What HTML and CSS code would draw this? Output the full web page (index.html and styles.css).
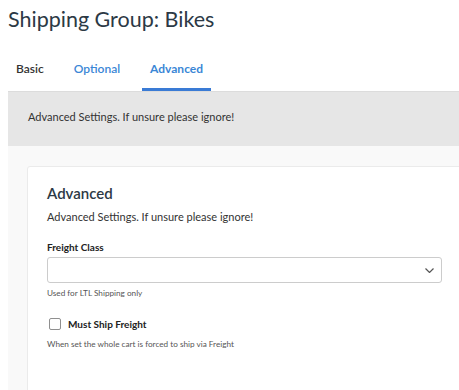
FILE: index.html
```html
<!DOCTYPE html>
<html lang="en">
<head>
  <meta charset="UTF-8" />
  <title>Shipping Group: Bikes</title>
  <link rel="stylesheet" href="styles.css">
</head>
<body>
  <h1 class="page-title">Shipping Group: Bikes</h1>
  <div class="tabs">
    <a class="tab">Basic</a>
    <a class="tab tab-link">Optional</a>
    <a class="tab tab-link active">Advanced</a>
  </div>
  <div class="tab-panel">
    <div class="panel-intro">Advanced Settings. If unsure please ignore!</div>
    <div class="panel-body">
      <div class="card">
        <h2 class="card-title">Advanced</h2>
        <p class="card-desc">Advanced Settings. If unsure please ignore!</p>

        <div class="field">
          <label class="field-label">Freight Class</label>
          <div class="select">
            <svg class="select-arrow" width="9" height="5" viewBox="0 0 9 5"><path d="M0.5 0.5l4 4 4-4" fill="none" stroke="#555" stroke-width="1.2"/></svg>
          </div>
          <div class="field-help">Used for LTL Shipping only</div>
        </div>

        <div class="field-check">
          <label class="check">
            <span class="check-box"></span>
            <span class="check-label">Must Ship Freight</span>
          </label>
          <div class="field-help help-tight">When set the whole cart is forced to ship via Freight</div>
        </div>
      </div>
    </div>
  </div>
</body>
</html>
```

FILE: styles.css
```css
body {
  font-family: 'Lato', sans-serif;
  color: #333;
  background: #fff;
  margin: 8px 0 0 8px;
  overflow: hidden;
}
.page-title {
  font-size: 21.5px;
  font-weight: 400;
  color: #2c3945;
  margin: 0;
  line-height: 22px;
}
.tabs {
  display: flex;
  gap: 14px;
  margin-top: 32px;
}
.tab {
  padding: 0 8px 12px;
  font-size: 12px;
  line-height: 14px;
  font-weight: 600;
  color: #333;
  border-bottom: 3px solid transparent;
}
.tab-link { color: #3a87d6; }
.tab.active {
  font-weight: 700;
  border-bottom-color: #3a7bd5;
}
.tab-panel {
  width: 480px;
  height: 299px;
  background: #f9f9f9;
  overflow: hidden;
}
.panel-intro {
  background: #e6e6e6;
  border-top: 1px solid #dcdcdc;
  padding: 18px 20px 22px;
  font-size: 11px;
  line-height: 14px;
}
.panel-body {
  padding: 20px 0 0 19px;
}
.card {
  background: #fff;
  border: 1px solid #ebebeb;
  border-radius: 3px;
  padding: 17px 19px 0;
  height: 300px;
}
.card-title {
  margin: 0;
  font-size: 15px;
  line-height: 18px;
  font-weight: 600;
  color: #2c3945;
}
.card-desc {
  margin: 8px 0 0;
  font-size: 11px;
  line-height: 13px;
}
.field { margin-top: 18px; }
.field-label {
  display: block;
  font-size: 10px;
  line-height: 12px;
  font-weight: 700;
  color: #222;
  margin-bottom: 4px;
}
.select {
  box-sizing: border-box;
  height: 26px;
  width: 395px;
  border: 1px solid #ccc;
  border-radius: 3px;
  display: flex;
  align-items: center;
  justify-content: flex-end;
}
.select-arrow { margin-right: 7px; }
.field-help {
  font-size: 8.2px;
  line-height: 10px;
  color: #555;
  margin-top: 5px;
}
.help-tight { margin-top: 9px; }
.field-check { margin-top: 20px; }
.check {
  display: flex;
  align-items: center;
  gap: 7px;
  padding-left: 2px;
}
.check-box {
  box-sizing: border-box;
  width: 12px;
  height: 12px;
  border: 1px solid #8f8f8f;
  border-radius: 2px;
}
.check-label {
  font-size: 10px;
  line-height: 12px;
  font-weight: 700;
  color: #222;
}
```
